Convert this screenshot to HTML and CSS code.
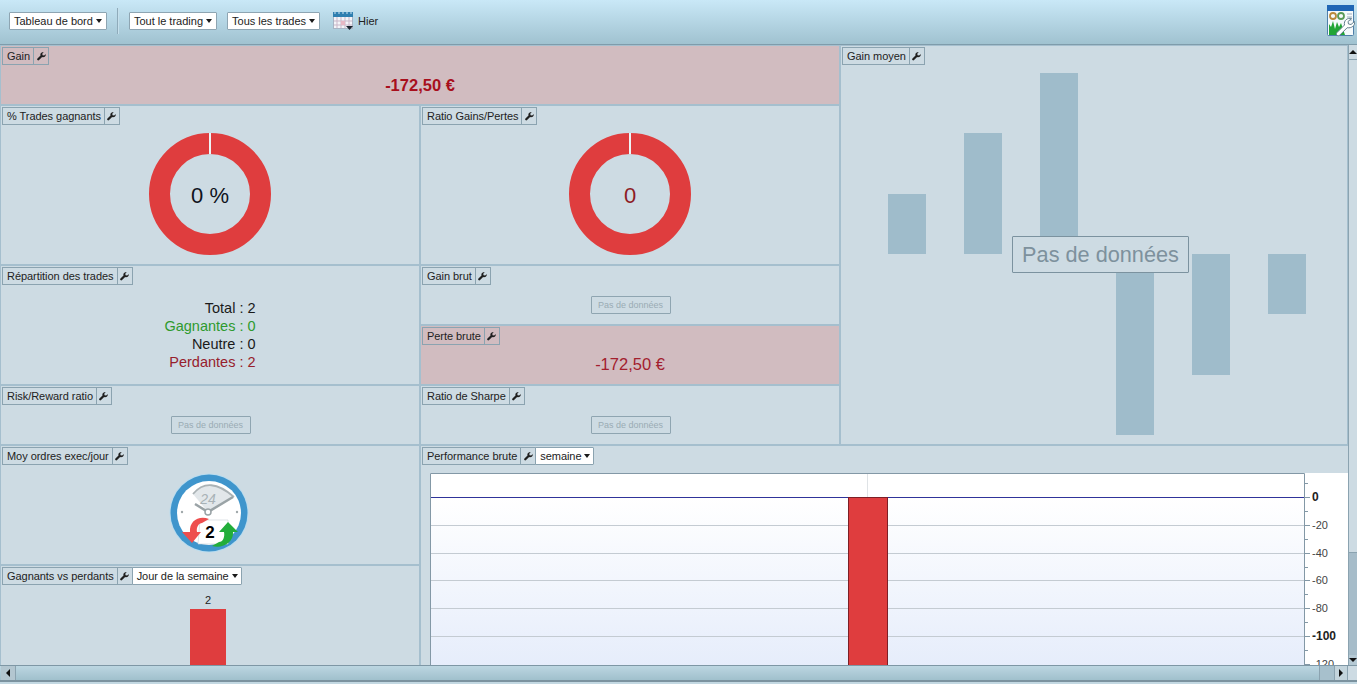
FILE: index.html
```html
<!DOCTYPE html>
<html lang="fr">
<head>
<meta charset="utf-8">
<title>Tableau de bord</title>
<link rel="stylesheet" href="styles.css">
</head>
<body>
<svg class="defs" width="0" height="0" aria-hidden="true">
  <defs>
    <symbol id="wrench" viewBox="0 0 10 10"><path d="M9.600 2.400 7.900 4 6.200 3.600 5.800 2 7.500.4C6 -.1 4.400.6 3.900 2c-.2.6-.2 1.200 0 1.800L.5 7.200c-.5.500-.5 1.300 0 1.800s1.300.5 1.800 0l3.400-3.400c1.800.6 3.600-.3 4-2 .1-.6.100-1.100-.1-1.600Z"/></symbol>
  </defs>
</svg>
<div class="app">
  <header class="toolbar">
    <button class="btn">Tableau de bord<i class="caret"></i></button>
    <span class="sep"></span>
    <button class="btn">Tout le trading<i class="caret"></i></button>
    <button class="btn">Tous les trades<i class="caret"></i></button>
    <svg class="cal" width="21" height="19" viewBox="0 0 21 19">
      <rect x="0.500" y="0.500" width="19" height="16" fill="#f4f4f8" stroke="#a9b4c4"/>
      <rect x="0" y="0" width="20" height="5" fill="#2f7fb0"/>
      <path d="M1 1h2M5 1h2M9 1h2M13 1h2M17 1h2" stroke="#cfe4f2" stroke-width="1"/>
      <path d="M4 5v11M8 5v11M12 5v11M16 5v11M1 9h18M1 13h18" stroke="#c9b7c9" stroke-width="1"/>
      <rect x="8" y="9" width="4" height="4" fill="#e6b7c4"/>
      <path d="M13 14h7l-3.500 4Z" fill="#1b2530"/>
    </svg>
    <span class="hier">Hier</span>
    <svg class="tool-icon" width="28" height="32" viewBox="0 0 28 32">
      <rect x="0.500" y="0.500" width="26" height="30" rx="1" fill="#f6fafc" stroke="#4f7fa8"/>
      <rect x="0" y="0" width="27" height="6" fill="#1f66b5"/>
      <circle cx="6" cy="11" r="3" fill="none" stroke="#b98a3c" stroke-width="1.800"/>
      <circle cx="14" cy="11" r="3" fill="none" stroke="#5a9a58" stroke-width="1.800"/>
      <path d="M20 9h5M20 12h5M20 15h5" stroke="#9fb0c0"/>
      <path d="M2 30V19l2 3 2-6 2 8 2-7 2 5 2-4 2 6 2 6Z" fill="#22a535"/>
      <path d="M27.500 16.500 24 19.500 21.500 19 21 16.500 24.500 13.500C20.500 12.500 16.500 15.500 17.500 20L10 27.500c-1.800 1.800.8 4.500 2.700 2.700L20.200 22.700C24.500 23.500 28.500 20.500 27.500 16.500Z" fill="#fff" stroke="#64808f"/>
    </svg>
  </header>

  <div class="middle">
    <main class="board">
      <section class="panel panel-red gain">
        <div class="head"><span class="seg">Gain</span><span class="seg seg-icon"><svg class="wr"><use href="#wrench"/></svg></span></div>
        <div class="value value-bold">-172,50 €</div>
      </section>

      <section class="panel avg">
        <div class="head"><span class="seg">Gain moyen</span><span class="seg seg-icon"><svg class="wr"><use href="#wrench"/></svg></span></div>
        <div class="avg-chart">
          <svg class="bars" width="506" height="380" viewBox="0 0 506 380">
            <g fill="#9fbccb">
              <rect x="46" y="122" width="38" height="60"/>
              <rect x="122" y="61" width="38" height="121"/>
              <rect x="198" y="1" width="38" height="181"/>
              <rect x="274" y="182" width="38" height="181"/>
              <rect x="350" y="182" width="38" height="121"/>
              <rect x="426" y="182" width="38" height="60"/>
            </g>
          </svg>
          <div class="nodata-big">Pas de données</div>
        </div>
      </section>

      <section class="panel wins">
        <div class="head"><span class="seg">% Trades gagnants</span><span class="seg seg-icon"><svg class="wr"><use href="#wrench"/></svg></span></div>
        <svg class="donut" width="122" height="122" viewBox="0 0 122 122">
          <circle cx="61" cy="61" r="50.500" fill="none" stroke="#df3d3e" stroke-width="21"/>
          <path d="M61 0v21" stroke="#eef3f5" stroke-width="2"/>
          <text x="61" y="70" class="donut-text" text-anchor="middle">0 %</text>
        </svg>
      </section>

      <section class="panel ratio">
        <div class="head"><span class="seg">Ratio Gains/Pertes</span><span class="seg seg-icon"><svg class="wr"><use href="#wrench"/></svg></span></div>
        <svg class="donut" width="122" height="122" viewBox="0 0 122 122">
          <circle cx="61" cy="61" r="50.500" fill="none" stroke="#df3d3e" stroke-width="21"/>
          <path d="M61 0v21" stroke="#eef3f5" stroke-width="2"/>
          <text x="61" y="70" class="donut-text donut-red" text-anchor="middle">0</text>
        </svg>
      </section>

      <section class="panel split">
        <div class="head"><span class="seg">Répartition des trades</span><span class="seg seg-icon"><svg class="wr"><use href="#wrench"/></svg></span></div>
        <div class="counts">
          <div>Total : 2</div>
          <div class="c-green">Gagnantes : 0</div>
          <div>Neutre : 0</div>
          <div class="c-red">Perdantes : 2</div>
        </div>
      </section>

      <section class="panel gross">
        <div class="head"><span class="seg">Gain brut</span><span class="seg seg-icon"><svg class="wr"><use href="#wrench"/></svg></span></div>
        <div class="nodata">Pas de données</div>
      </section>

      <section class="panel panel-red loss">
        <div class="head"><span class="seg">Perte brute</span><span class="seg seg-icon"><svg class="wr"><use href="#wrench"/></svg></span></div>
        <div class="value">-172,50 €</div>
      </section>

      <section class="panel risk">
        <div class="head"><span class="seg">Risk/Reward ratio</span><span class="seg seg-icon"><svg class="wr"><use href="#wrench"/></svg></span></div>
        <div class="nodata">Pas de données</div>
      </section>

      <section class="panel sharpe">
        <div class="head"><span class="seg">Ratio de Sharpe</span><span class="seg seg-icon"><svg class="wr"><use href="#wrench"/></svg></span></div>
        <div class="nodata">Pas de données</div>
      </section>

      <section class="panel orders">
        <div class="head"><span class="seg">Moy ordres exec/jour</span><span class="seg seg-icon"><svg class="wr"><use href="#wrench"/></svg></span></div>
        <svg class="clock" width="80" height="80" viewBox="0 0 80 80">
          <circle cx="40" cy="40" r="39.500" fill="#b9dcef"/>
          <circle cx="40" cy="40" r="38.500" fill="#3f95cc"/>
          <circle cx="40" cy="40" r="32" fill="#fff"/>
          <path d="M24 21Q40 2 65 24L39 39Z" fill="#e2e7ea"/>
          <path d="M24 21Q40 2 65 24" fill="none" stroke="#aab2b5" stroke-width="1.800"/>
          <text x="39" y="31" class="clock-24" text-anchor="middle">24</text>
          <path d="M26 31 39 39 64 24" fill="none" stroke="#9aa3a6" stroke-width="2.500"/>
          <circle cx="39" cy="39" r="3" fill="#fff" stroke="#9aa3a6" stroke-width="1.500"/>
          <circle cx="13" cy="39" r="1.200" fill="#a0a8ab"/>
          <circle cx="68" cy="39" r="1.200" fill="#a0a8ab"/>
          <path d="M31 47H59V71H29Z" fill="#fff" stroke="#c9d2d6" stroke-width=".6"/>
          <path d="M21 59C20 48 30 42 40 46L33 50C30 50 27 54 28 59H32L23 70 13 59Z" fill="#ee4e4e"/>
          <path d="M64 59C65 69 54 76 43 73L50 69C54 69 56 64 55 59H50L59 49 69 59Z" fill="#22ad3a"/>
          <text x="41" y="65" class="clock-n" text-anchor="middle">2</text>
        </svg>
      </section>

      <section class="panel winlose">
        <div class="head"><span class="seg">Gagnants vs perdants</span><span class="seg seg-icon"><svg class="wr"><use href="#wrench"/></svg></span><span class="seg seg-drop">Jour de la semaine<i class="caret"></i></span></div>
        <div class="mini">
          <span class="mini-label">2</span>
          <span class="mini-bar"></span>
        </div>
      </section>

      <section class="panel perf">
        <div class="head"><span class="seg">Performance brute</span><span class="seg seg-icon"><svg class="wr"><use href="#wrench"/></svg></span><span class="seg seg-drop">semaine<i class="caret"></i></span></div>
        <svg class="perf-chart" width="918" height="192" viewBox="0 0 918 192">
          <defs>
            <linearGradient id="plot" x1="0" y1="0" x2="0" y2="1">
              <stop offset="0" stop-color="#ffffff"/>
              <stop offset="0.130" stop-color="#ffffff"/>
              <stop offset="1" stop-color="#e6edfb"/>
            </linearGradient>
          </defs>
          <rect x="0" y="0" width="918" height="192" fill="#fff"/>
          <rect x="0" y="0" width="874" height="192" fill="url(#plot)"/>
          <path d="M.5 192V.5H874.500V192" fill="none" stroke="#8398a6"/>
          <path d="M437.500 1V24" stroke="#dfe3e6"/>
          <path d="M1 52.500H874M1 80.500H874M1 107.500H874M1 135.500H874M1 163.500H874" stroke="#c4cbd2"/>
          <path d="M1 24.500H874" stroke="#30349a"/>
          <path d="M875 24.500h5M875 52.500h5M875 80.500h5M875 107.500h5M875 135.500h5M875 163.500h5M875 191.500h5M875 10.500h3M875 38.500h3M875 66.500h3M875 94.500h3M875 121.500h3M875 149.500h3M875 177.500h3" stroke="#8398a6"/>
          <rect x="418.500" y="24.500" width="39" height="170" fill="#df3d3e" stroke="#7d1f26"/>
          <g class="axis">
            <text x="882" y="28" class="axis-big">0</text>
            <text x="882" y="56">-20</text>
            <text x="882" y="84">-40</text>
            <text x="882" y="111">-60</text>
            <text x="882" y="139">-80</text>
            <text x="882" y="167" class="axis-big">-100</text>
            <text x="882" y="195">-120</text>
          </g>
        </svg>
      </section>
    </main>
    <aside class="vscroll">
      <span class="v-btn v-up"><i class="tri tri-up"></i></span>
      <span class="v-track"></span>
      <span class="v-thumb"></span>
      <span class="v-btn v-down"><i class="tri tri-down"></i></span>
    </aside>
  </div>

  <div class="hscroll">
    <span class="h-btn"><i class="tri tri-left"></i></span>
    <span class="h-track"></span>
    <span class="h-grip"></span>
    <span class="h-btn h-btn-r"><i class="tri tri-right"></i></span>
    <span class="h-corner"></span>
  </div>
  <div class="foot"></div>
</div>
</body>
</html>
```

FILE: styles.css
```css
* { box-sizing: border-box; }
html, body { margin: 0; padding: 0; height: 100%; overflow: hidden; }
body { font-family: "Liberation Sans", Arial, sans-serif; font-size: 11px; color: #1a1a1a; background: #cddbe3; }
.defs { display: block; height: 0; }
.app { display: flex; flex-direction: column; width: 1357px; height: 684px; }

/* toolbar */
.toolbar { flex: none; height: 45px; display: flex; align-items: center; padding: 0 2px 2px 9px; background: linear-gradient(#c9e8f7, #a0c2d0); border-bottom: 1px solid #7f9cab; }
.btn { height: 18px; padding: 0 4px; display: inline-flex; align-items: center; background: #fff; border: 1px solid #8ea5b2; border-radius: 1px; font: 11px "Liberation Sans", Arial, sans-serif; color: #222; margin-right: 10px; }
.caret { display: inline-block; width: 0; height: 0; margin-left: 3px; border-left: 3.500px solid transparent; border-right: 3.500px solid transparent; border-top: 4px solid #1a1a1a; }
.sep { width: 1px; height: 26px; background: #8fabba; margin: 0 11px 0 0; box-shadow: 1px 0 0 #c6e0ec; }
.cal { margin: 0 4px 0 3px; }
.hier { font-size: 11px; color: #222; }
.tool-icon { margin-left: auto; }

/* board */
.middle { flex: none; height: 620px; display: flex; }
.board { width: 1348px; height: 620px; overflow: hidden; display: grid; grid-template-columns: 420px 420px 508px; grid-template-rows: 60px 160px 60px 60px 60px 120px 100px; }
.panel { background: #cddbe3; border: 1px solid #a5bfce; padding: 1px; overflow: hidden; display: flex; flex-direction: column; min-width: 0; min-height: 0; }
.panel-red { background: #d1bcc0; }
.gain { grid-column: 1 / 3; grid-row: 1; }
.avg { grid-column: 3; grid-row: 1 / 6; position: relative; }
.wins { grid-column: 1; grid-row: 2; }
.ratio { grid-column: 2; grid-row: 2; }
.split { grid-column: 1; grid-row: 3 / 5; }
.gross { grid-column: 2; grid-row: 3; }
.loss { grid-column: 2; grid-row: 4; }
.risk { grid-column: 1; grid-row: 5; }
.sharpe { grid-column: 2; grid-row: 5; }
.orders { grid-column: 1; grid-row: 6; }
.winlose { grid-column: 1; grid-row: 7; border-bottom: 0; }
.perf { grid-column: 2 / 4; grid-row: 6 / 8; border-bottom: 0; border-right: 0; }

.head { flex: none; display: flex; height: 18px; align-self: flex-start; }
.seg { height: 18px; padding: 0 3px 0 4px; display: inline-flex; align-items: center; border: 1px solid #8ba3b0; margin-left: -1px; font-size: 11px; letter-spacing: -.05px; color: #222; white-space: nowrap; }
.seg:first-child { margin-left: 0; }
.seg-icon { width: 16px; padding: 0; justify-content: center; }
.seg-drop { background: #fff; border-radius: 1px; }
.wr { width: 9px; height: 9px; fill: #1f1f1f; }

.value { text-align: center; font-size: 16.500px; color: #a3202e; margin-top: 10px; line-height: 18px; }
.value-bold { font-weight: 700; color: #a80f1c; margin-top: 11px; }
.nodata { align-self: center; margin: 11px 0 0 1px; width: 80px; height: 18px; display: flex; align-items: center; justify-content: center; border: 1px solid #8fa5b1; border-radius: 1px; font-size: 9px; color: #9aabb4; }

.donut { display: block; align-self: center; margin-top: 8px; flex: none; }
.donut-text { font-family: "Liberation Sans", Arial, sans-serif; font-size: 22px; fill: #10131c; }
.donut-red { fill: #8d1c25; }

.counts { align-self: center; margin-top: 14px; text-align: right; font-size: 14.500px; line-height: 18px; color: #1a1a1a; }
.c-green { color: #2e9a2e; }
.c-red { color: #97202c; }

.clock { display: block; align-self: center; margin-top: 8px; flex: none; margin-left: -2px; }
.clock-24 { font-family: "Liberation Sans", Arial, sans-serif; font-size: 14px; font-style: italic; fill: #a8b2b6; }
.clock-n { font-family: "Liberation Sans", Arial, sans-serif; font-size: 17px; font-weight: 700; fill: #000; }

.mini { display: flex; flex-direction: column; align-items: center; margin-top: 7px; margin-left: -4px; }
.mini-label { font-size: 11px; line-height: 16px; color: #222; }
.mini-bar { width: 36px; height: 60px; margin-top: 1px; background: #df3d3e; }

.avg-chart { position: relative; margin-top: 7px; }
.bars { display: block; }
.nodata-big { position: absolute; left: 170px; top: 164px; width: 177px; height: 37px; display: flex; align-items: center; justify-content: center; border: 1px solid #7b929f; border-radius: 1px; background: #cddbe3; font-size: 21.700px; color: #7d919d; }

.perf-chart { display: block; flex: none; margin: 8px 0 0 8px; }
.axis text { font-family: "Liberation Sans", Arial, sans-serif; font-size: 11px; fill: #444; }
.axis .axis-big { font-size: 12px; font-weight: 700; fill: #222; }

/* scrollbars */
.vscroll { width: 9px; height: 620px; display: flex; flex-direction: column; background: #cddbe3; border-left: 1px solid #8ba3b0; }
.v-btn { flex: none; height: 15px; display: flex; justify-content: center; align-items: center; background: #cddbe3; }
.v-up { border-bottom: 1px solid #8ba3b0; }
.v-down { height: 10px; background: #b5c9d4; }
.v-track { height: 492px; flex: none; }
.v-thumb { flex: 1; background: #a6bcc9; border-top: 1px solid #8ba3b0; }
.tri { display: block; width: 0; height: 0; }
.tri-up { border-left: 4px solid transparent; border-right: 4px solid transparent; border-bottom: 4px solid #111; }
.tri-down { border-left: 4px solid transparent; border-right: 4px solid transparent; border-top: 4px solid #111; }
.tri-left { border-top: 4px solid transparent; border-bottom: 4px solid transparent; border-right: 4px solid #111; }
.tri-right { border-top: 4px solid transparent; border-bottom: 4px solid transparent; border-left: 4px solid #111; }

.hscroll { flex: none; height: 17px; display: flex; background: linear-gradient(#bcd6e1, #a0c0cc); border-top: 1px solid #7e97a5; border-bottom: 2px solid #7b929f; }
.h-btn { flex: none; width: 15px; margin-left: 1px; display: flex; align-items: center; justify-content: center; background: #b3c6d0; border-right: 1px solid #8ba3b0; }
.h-track { flex: 1; }
.h-grip { flex: none; width: 15px; border-left: 1px solid #8ba3b0; background: #a7c0cc; }
.h-btn-r { margin-left: 0; width: 14px; border-left: 1px solid #8ba3b0; background: #c3d4dc; }
.h-corner { flex: none; width: 9px; background: #cddbe3; }
.foot { flex: none; height: 2px; background: #c3d8e2; }
```
